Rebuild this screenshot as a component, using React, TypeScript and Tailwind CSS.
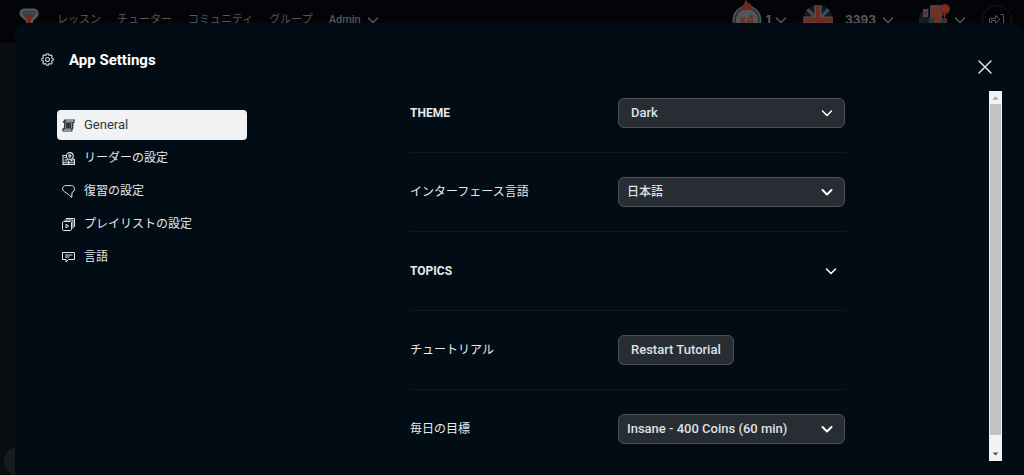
import type { ReactNode } from "react";
import { clsx } from "clsx";

type IconProps = { className?: string };

const Chevron = ({ className }: IconProps) => (
    <svg viewBox="0 0 12 12" className={className} fill="none" stroke="currentColor" strokeLinecap="round" strokeLinejoin="round" aria-hidden="true">
        <path d="M1.5 4 6 8.500 10.500 4" />
    </svg>
);

const Gear = ({ className }: IconProps) => (
    <svg viewBox="0 0 16 16" className={className} fill="none" stroke="currentColor" strokeWidth="1.400" strokeLinejoin="round" aria-hidden="true">
        <path d="M6.7 1h2.6l.4 1.7 1 .4 1.5-.9 1.7 1.7-.9 1.5.4 1 1.6.4v2.4l-1.6.4-.4 1 .9 1.5-1.7 1.7-1.5-.9-1 .4L9.3 15H6.7l-.4-1.7-1-.4-1.5.9-1.7-1.7.9-1.5-.4-1L1 9.2V6.8l1.6-.4.4-1-.9-1.5 1.7-1.7 1.5.9 1-.4z" />
        <circle cx="8" cy="8" r="2.4" />
    </svg>
);

const GeneralIcon = () => (
    <svg viewBox="0 0 13 13" className="size-[13px]" fill="none" stroke="currentColor" strokeWidth="1.200" aria-hidden="true">
        <path d="M3 1h9.3l-.5 2.600h-1.300L9.800 12H.9L1 9.800h1.300L3 1Z" />
        <path d="M1 3.200h9.600M2.300 9.800h7.600M3.300 1.200.9 3.200M11 5l-.4 5" />
        <path d="M4.200 4.600h4.600l-.3 3.800H4z" fill="currentColor" />
    </svg>
);

const ReaderIcon = () => (
    <svg viewBox="0 0 13 13" className="size-[13px]" fill="none" stroke="currentColor" strokeWidth="1.100" aria-hidden="true">
        <path d="M4 3.500H1v8.900h11.500V7M1 10.300h11.500M2.500 5.500h1.600M2.500 8h2.600M6.600 8.500v3.900M8.500 8.400h2" />
        <circle cx="7.800" cy="4" r="3.400" />
        <circle cx="7.800" cy="4" r="1.100" />
        <path d="m10.400 6.400 1.800 2M5.600 6.800 4.600 8.500" />
    </svg>
);

const ReviewIcon = () => (
    <svg viewBox="0 0 13 13" className="size-[13px]" fill="none" stroke="currentColor" strokeLinejoin="round" aria-hidden="true">
        <path d="M3.600.600h5.800C11.200.600 12.400 2 12.400 3.900c0 1.500-.7 2.900-2.400 3.600l-.3 5-3.200-3C4.500 8 .600 6.100.600 3.900.600 2 1.800.600 3.600.600Z" />
    </svg>
);

const PlaylistIcon = () => (
    <svg viewBox="0 0 13 13" className="size-[13px]" fill="none" stroke="currentColor" strokeLinejoin="round" aria-hidden="true">
        <rect x="0.500" y="3.500" width="9" height="9" rx="1" />
        <path d="M2.500 2h8.400v8.500" />
        <path d="M4 .500h8.500V9" />
        <path d="M4 6.200 6.700 8 4 9.800z" />
    </svg>
);

const LanguageIcon = () => (
    <svg viewBox="0 0 13 13" className="size-[13px]" fill="none" stroke="currentColor" strokeLinejoin="round" aria-hidden="true">
        <path d="M.500 1.500h12v7h-6L4 11V8.500H.500zM3 4h7.500M3 6h4.500" />
    </svg>
);

const Logo = () => (
    <svg viewBox="0 0 20 20" className="size-5" aria-hidden="true">
        <path d="M5 .5h10a4.8 4.8 0 0 1 4.6 5.3C19.3 9 16 11 14 13v7H7v-7C5 11 .7 9 .4 5.8A4.800 4.800 0 0 1 5 .5Z" fill="#55585c" />
        <path d="M6 2.5h8c2 0 3.300 1.300 3.300 3L14.800 8H5.200L2.800 5.500c0-1.700 1.200-3 3.200-3Z" fill="#3a4149" />
        <path d="M4.500 7.500h11l-3.500 4v8H8v-8z" fill="#742715" />
        <path d="M6 5.500h2M9 5.500h2M12 5.500h2" stroke="#6a4640" />
    </svg>
);

const StreakBadge = () => (
    <svg viewBox="0 0 30 40" className="h-10 w-[30px]" aria-hidden="true">
        <circle cx="15" cy="20" r="13.500" fill="#2a2e33" stroke="#4c4f53" strokeWidth="2" />
        <circle cx="15" cy="20" r="11" fill="#53565a" />
        <path d="M10 8c0-3 3-3 3-8 2 1 3 2 3 4l2-1c2 3 2 4 1 6-3 2-7 2-9-1Z" fill="#702b1b" />
        <text x="15" y="24" textAnchor="middle" className="fill-[#7a2a1a] font-['Inter'] text-xs font-bold">x4</text>
    </svg>
);

const Flag = () => (
    <svg viewBox="0 0 30 30" className="size-[30px] rounded-full" aria-hidden="true">
        <path d="M0 0h30v30H0z" fill="#121a28" />
        <path d="m0 0 30 30M30 0 0 30" stroke="#505357" strokeWidth="3" />
        <path d="m0 0 30 30M30 0 0 30" stroke="#702b1f" />
        <path d="M15 0v30M0 15h30" stroke="#505357" strokeWidth="7" />
        <path d="M15 0v30" stroke="#702b1f" strokeWidth="4" />
        <path d="M0 15h30" stroke="#702b1f" strokeWidth="5" />
    </svg>
);

const Avatar = () => (
    <svg viewBox="0 0 32 32" className="size-8" aria-hidden="true">
        <path d="M1 32V16c0-6 4-11 10-12v28z" fill="#171c21" />
        <path d="M5 5h5v8H5z" fill="#454950" />
        <path d="m6 7 3 1-1 3-2-1z" fill="#6b2a20" />
        <path d="M12 1h12v20H12z" fill="#49423f" />
        <path d="m13 3 9 2-3 4 5 2-4 4 5 6h-6l-3-7-4-2 4-4z" fill="#7c2c1b" />
        <path d="M11 14h6l-1 4 3 5h-8zM23 15l6-1v9h-6z" fill="#30363c" />
        <circle cx="27" cy="5" r="5" fill="#772817" />
        <path d="m24 4 5 3M26 2l3 3M22 12l5-2-1 5" stroke="#933621" fill="none" />
    </svg>
);

const ExitIcon = () => (
    <svg viewBox="0 0 18 14" className="h-[14px] w-[18px]" fill="none" stroke="currentColor" strokeLinejoin="round" aria-hidden="true">
        <path d="M1.500 10.500v-5h6v-3l4.500 4-4.500 4v-3h-4v3zM12.500 1.500h3v11h-3" />
    </svg>
);

const navLinks = ["レッスン", "チューター", "コミュニティ", "グループ"];

const menu: { label: string; icon: ReactNode; active?: boolean }[] = [
    { label: "General", icon: <GeneralIcon />, active: true },
    { label: "リーダーの設定", icon: <ReaderIcon /> },
    { label: "復習の設定", icon: <ReviewIcon /> },
    { label: "プレイリストの設定", icon: <PlaylistIcon /> },
    { label: "言語", icon: <LanguageIcon /> },
];

function TopBar() {
    return (
        <header className="flex h-[43px] items-start justify-between bg-[#020408] pr-3 pl-[19px] text-[#56595c]">
            <nav className="flex h-10 items-center gap-4 text-[11px]">
                <a href="#home" aria-label="Home" className="mr-[2px] -mt-1"><Logo /></a>
                {navLinks.map((link) => (
                    <a key={link} href="#nav">{link}</a>
                ))}
                <button type="button" className="flex items-center gap-1.5 font-medium">
                    Admin <Chevron className="size-3 stroke-[1.500]" />
                </button>
            </nav>
            <div className="flex h-10 items-center gap-4 font-['Inter'] text-xs font-bold">
                <button type="button" className="flex items-center gap-1">
                    <StreakBadge /> 1 <Chevron className="size-3 stroke-[1.500]" />
                </button>
                <button type="button" className="flex items-center gap-3">
                    <Flag />
                    <span className="flex items-center gap-1.5">3393 <Chevron className="size-3 stroke-[1.500]" /></span>
                </button>
                <button type="button" className="ml-2 flex items-center gap-1">
                    <Avatar /> <Chevron className="size-3 stroke-[1.500]" />
                </button>
                <button type="button" aria-label="Log out" className="flex size-[30px] items-center justify-center rounded-full border border-[#15191d]">
                    <ExitIcon />
                </button>
            </div>
        </header>
    );
}

function SettingRow({ label, htmlFor, bold, children }: { label: string; htmlFor: string; bold?: boolean; children: ReactNode }) {
    return (
        <div className="grid grid-cols-[208px_1fr] items-center border-b border-[#10171d] py-6 first:pt-[7px] last:border-0">
            <label htmlFor={htmlFor} className={clsx("text-xs text-[#e8eaeb]", bold && "font-bold")}>{label}</label>
            {children}
        </div>
    );
}

function SelectBox({ id, value, lang, thin }: { id: string; value: string; lang?: string; thin?: boolean }) {
    return (
        <div className="relative">
            <select
                id={id}
                className={clsx(
                    "block h-[30px] w-full appearance-none rounded-md border border-[#4b5156] bg-[#282d33] pr-8 font-medium text-[#dfe1e3]",
                    thin ? "pl-3" : "pl-2",
                    lang === "ja" ? "text-xs" : "text-[13px]"
                )}
            >
                <option>{value}</option>
            </select>
            <Chevron className={clsx("pointer-events-none absolute top-[9px] right-3 size-3 text-white", thin ? "stroke-[1.500]" : "stroke-2")} />
        </div>
    );
}

function ScrollTrack() {
    return (
        <div className="flex w-[13px] shrink-0 flex-col items-center bg-[#f1f2f3] px-px" aria-hidden="true">
            <svg viewBox="0 0 11 13" className="h-[13px] w-[11px]"><path d="M2.500 8.500h6l-3-3z" fill="#9c9da0" /></svg>
            <div className="w-full flex-[332] bg-[#c1c2c4]" />
            <div className="flex-[13]" />
            <svg viewBox="0 0 11 13" className="h-[13px] w-[11px]"><path d="M2.500 4.500h6l-3 3z" fill="#505256" /></svg>
        </div>
    );
}

export default function App() {
    return (
        <div className="relative h-screen overflow-hidden bg-[#0a0d0f] font-['Roboto','Noto_Sans_CJK_JP',sans-serif]">
            <TopBar />
            {/* floating chat bubble, mostly under the dialog */}
            <div className="absolute bottom-0 left-1 size-7 rounded-full bg-[#161c23]" />

            <div className="absolute inset-0 pt-[23px] pl-[15px]">
                <section role="dialog" aria-labelledby="settings-title" className="flex h-full flex-col rounded-t-xl bg-[#020c15] pb-[14px]">
                    <div className="flex h-[68px] shrink-0 items-end justify-between pr-8 pl-[26px]">
                        <h1 id="settings-title" className="flex items-center gap-[15px] pb-5 text-[15px] font-bold text-white">
                            <Gear className="size-[13px] text-[#c9ccce]" />
                            App Settings
                        </h1>
                        <button type="button" aria-label="Close" className="mb-[17px] text-[#dcdee0]">
                            <svg viewBox="0 0 14 14" className="size-[14px]" fill="none" stroke="currentColor" strokeWidth="1.500" strokeLinecap="round" aria-hidden="true">
                                <path d="m1 1 12 12M13 1 1 13" />
                            </svg>
                        </button>
                    </div>

                    <div className="flex min-h-0 flex-1 justify-between pr-[22px] pl-[42px]">
                        <nav className="flex w-[190px] shrink-0 flex-col gap-[3px] pt-[19px]">
                            {menu.map((item) => (
                                <button
                                    key={item.label}
                                    type="button"
                                    className={clsx(
                                        "flex h-[30px] items-center gap-[9px] rounded px-[5px]",
                                        item.active ? "bg-[#f1f2f4] text-[13px] text-[#30363d]" : "text-xs text-[#e4e6e8]"
                                    )}
                                >
                                    {item.icon}
                                    {item.label}
                                </button>
                            ))}
                        </nav>

                        <form className="ml-[19px] max-w-[435px] flex-1 overflow-hidden">
                            <SettingRow label="THEME" htmlFor="theme" bold>
                                <SelectBox id="theme" value="Dark" thin />
                            </SettingRow>
                            <SettingRow label="インターフェース言語" htmlFor="interface-language">
                                <SelectBox id="interface-language" value="日本語" lang="ja" />
                            </SettingRow>
                            <SettingRow label="TOPICS" htmlFor="topics" bold>
                                <button id="topics" type="button" aria-label="Topics" className="flex h-[30px] items-center justify-end pr-2 text-white">
                                    <Chevron className="size-3 stroke-[1.500]" />
                                </button>
                            </SettingRow>
                            <SettingRow label="チュートリアル" htmlFor="tutorial">
                                <button id="tutorial" type="button" className="h-[30px] justify-self-start rounded-md border border-[#4b5156] bg-[#282d33] px-3 text-[13px] font-medium text-[#dfe1e3]">
                                    Restart Tutorial
                                </button>
                            </SettingRow>
                            <SettingRow label="毎日の目標" htmlFor="daily-goal">
                                <SelectBox id="daily-goal" value="Insane - 400 Coins (60 min)" />
                            </SettingRow>
                        </form>

                        <ScrollTrack />
                    </div>
                </section>
            </div>
        </div>
    );
}
